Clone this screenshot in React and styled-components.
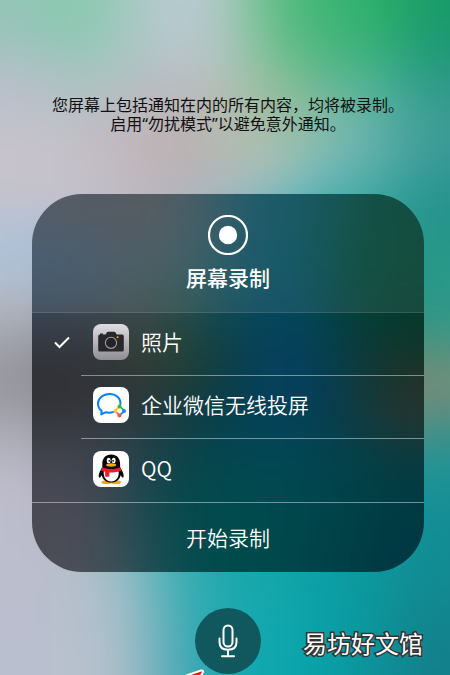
import React, { useId, useState } from 'react';
import styled, { createGlobalStyle } from 'styled-components';

const GlobalStyle = createGlobalStyle`
  * {
    box-sizing: border-box;
  }

  body {
    margin: 0;
    font-family: 'Noto Sans CJK SC', 'Noto Sans', sans-serif;
  }

  button {
    font-family: inherit;
    border: none;
    padding: 0;
    cursor: pointer;
  }
`;

const wallpaper = [
  '94c5b6 82caac a0c9bc bccad6 aec9c2 5cbe80 3cb476 2eb269 189a6a',
  'b2bfc8 a0c4bc aec4c4 bcc0ca b5c4c0 82bf94 55b588 44b288 249880',
  'c0c0cc bcc0c8 bcb8c0 bcb4b8 b4bcb0 a0bc9c 84b8a4 60b4a8 3a9c94',
  'c8c4ca c6c0c8 c2b8bc bcacac b8b8b4 b0c4b4 80bcb8 64b0ac 3c9a98',
  'c4c2cc c4c2cc c0bcc4 b8b8c0 a4bcc8 80b8c4 48b0b4 38a8a4 20918c',
  'aac2dc 9cb8dc a4b4c8 98b4b8 58a8b8 40a4b4 2c9c98 28987c 28988a',
  'b6bec8 acb8c4 98a8a4 60a098 30a0b0 20a0b0 189888 209474 28988c',
  'a4a5ae 888890 78806c 508468 2090b0 1888b0 188c80 389070 3c9684',
  '92929a 78787f 687468 407c70 1c88a8 147cac 288478 88806c 848c78',
  'aaaab4 94949e 607c84 389098 2098b0 1890b0 2c9090 70887c 409088',
  'bcbcca a8a8b8 6c98a4 2ca0a4 18a8ac 14a4ac 109ca0 1c9498 1c9498',
  'bebecd b4b4c4 78a8b0 28a8ac 14a8ac 10a4a8 0c9ca4 109498 148c94',
  'bcbecd b8bfcc 9cc0c6 3cb0b4 1ea8ac 14a6aa 0a9fa4 0c989c 128c94',
  'babecd b8bfcd a4bfc8 48acb4 1aa8ae 14a8ae 08a0a6 0c969c 12868e',
  'babfcf bac0ce acc0ca 50a8b4 16a8b0 10a8b0 06a0a8 0e929a 137f8a'
];

const glass = [
  '484f59 484e57 4a4e54 36525c 0a4e5f 074c59 02463e 003d32',
  '35536b 3b5364 3d5558 2c535c 074c60 004c5e 004632 003f2c',
  '3c4654 3e4852 3c4a48 144c4c 04465c 04465a 043f3a 033a2e',
  '303136 2f3236 34402f 1a3e34 063e56 064064 083c40 183328',
  '303136 323438 28383c 0c3c42 04405a 043f60 0e3a42 2e322a',
  '43454f 3c444e 1a424a 04454c 024852 024654 02424a 083c42',
  '4a4955 424852 10484e 014a4c 004a4e 00484e 004248 003a42',
  '4c4c56 48505a 184e54 004b4c 004a4c 00464a 003f46 003742'
];

const Backdrop = styled.svg`
  position: absolute;
  inset: 0;
  width: 100%;
  height: 100%;
`;

const Page = styled.main`
  position: relative;
  display: flex;
  flex-direction: column;
  align-items: center;
  min-height: 100vh;
  padding: 96px 26px 0 32px;
  overflow: hidden;
`;

const Notice = styled.p`
  position: relative;
  margin: 0;
  color: #111;
  font-family: 'Noto Sans', 'Noto Sans CJK SC', sans-serif;
  font-size: 16px;
  line-height: 19px;
  text-align: center;
  white-space: nowrap;
`;

const Card = styled.form`
  position: relative;
  display: flex;
  flex-direction: column;
  align-self: stretch;
  margin: 60px 0 0;
  border-radius: 50px;
  overflow: hidden;
  color: #fff;
`;

const Header = styled.header`
  position: relative;
  display: flex;
  flex-direction: column;
  align-items: center;
  gap: 6px;
  height: 119px;
  padding-top: 21px;
  border-bottom: 1px solid #ffffff1c;
  background: #ffffff14;
`;

const Title = styled.h1`
  margin: 0;
  font-size: 21px;
  font-weight: 500;
  line-height: 32px;
`;

const Options = styled.div`
  position: relative;
  display: flex;
  flex-direction: column;
  padding-left: 49px;
`;

const Option = styled.label`
  position: relative;
  display: flex;
  align-items: center;
  gap: 12px;
  height: 63px;
  padding: 0 0 4px 12px;
  border-bottom: ${({ $last }) => ($last ? 'none' : '1px solid #ffffff70')};
  cursor: pointer;
`;

const Name = styled.span`
  padding-bottom: 2px;
  font-size: 21px;
  font-weight: 350;
  line-height: 30px;
`;

const Radio = styled.input`
  appearance: none;
  position: absolute;
  left: -49px;
  width: 49px;
  height: 100%;
  margin: 0;
  cursor: pointer;
`;

const Tick = styled.svg`
  position: absolute;
  left: -28px;
  width: 18px;
  height: 14px;
  pointer-events: none;
`;

const AppIcon = styled.svg`
  flex: none;
  width: 36px;
  height: 36px;
  border-radius: 8px;
`;

const StartButton = styled.button`
  position: relative;
  height: 70px;
  padding-bottom: 2px;
  border-top: 1px solid #ffffff70;
  background: transparent;
  color: #fff;
  font-size: 21px;
  font-weight: 350;
  line-height: 32px;
`;

const MicButton = styled.button`
  position: relative;
  display: flex;
  align-items: center;
  justify-content: center;
  flex: none;
  width: 66px;
  height: 66px;
  margin-top: 36px;
  border-radius: 50%;
  background: #10575e;
`;

const Watermark = styled.span`
  position: absolute;
  right: 27px;
  bottom: 14px;
  color: #fff;
  font-size: 24px;
  line-height: 36px;
  paint-order: stroke fill;
  -webkit-text-stroke: 3px #333;
`;

const Arrow = styled.svg`
  position: absolute;
  left: 180px;
  bottom: 0;
  width: 26px;
  height: 6px;
`;

// Grid of colours melted together into a soft backdrop
const ColorMesh = ({ rows }) => {
  const id = useId();
  const cells = rows.map(row => row.split(' '));
  const w = cells[0].length;
  const h = cells.length;
  const clamp = (n, max) => Math.min(Math.max(n, 0), max - 1);
  const rects = [];

  // two extra cells on every side keep the edges from fading out
  for (let y = -2; y < h + 2; y++) {
    for (let x = -2; x < w + 2; x++) {
      rects.push(
        <rect
          key={`${x}:${y}`}
          x={x * 10}
          y={y * 10}
          width="10"
          height="10"
          fill={`#${cells[clamp(y, h)][clamp(x, w)]}`}
        />
      );
    }
  }

  return (
    <Backdrop
      viewBox={`0 0 ${w * 10} ${h * 10}`}
      preserveAspectRatio="none"
      aria-hidden="true"
    >
      <filter
        id={id}
        filterUnits="userSpaceOnUse"
        x="-20"
        y="-20"
        width={w * 10 + 40}
        height={h * 10 + 40}
        colorInterpolationFilters="sRGB"
      >
        <feGaussianBlur stdDeviation="6" />
      </filter>
      <g filter={`url(#${id})`} shapeRendering="crispEdges">
        {rects}
      </g>
    </Backdrop>
  );
};

const CameraIcon = () => (
  <AppIcon viewBox="0 0 36 36" aria-hidden="true">
    <defs>
      <linearGradient id="silver" x1="0" y1="0" x2="0" y2="1">
        <stop offset="0" stopColor="#dedee2" />
        <stop offset="1" stopColor="#8f8e96" />
      </linearGradient>
    </defs>
    <rect width="36" height="36" fill="url(#silver)" />
    <path
      d="M7 10.5V9.6h3v.9h2.6l1.2-2.1q.4-.7 1.2-.7h6.3q.8 0 1.2.7l1.2 2.1h5.6q1.5 0 1.5 1.5v14q0 1.5-1.5 1.5H6.7q-1.5 0-1.5-1.5V12q0-1.5 1.8-1.5z"
      fill="#29292b"
    />
    <circle cx="18" cy="18.8" r="5.6" fill="#242426" stroke="#9b9ba1" strokeWidth="1.1" />
    <circle cx="24.6" cy="13.2" r="1" fill="#f0b428" />
  </AppIcon>
);

const WeComIcon = () => (
  <AppIcon viewBox="0 0 36 36" aria-hidden="true">
    <rect width="36" height="36" fill="#fff" />
    <path
      d="M27.4 17.5C28 10.8 22.6 7 16.6 7 10 7 5 11.2 5 16.8c0 3.2 1.4 5.4 3.7 7.1L8.2 27.4l4.2-2.1c2.5.6 5.4.6 7.8-.3"
      fill="none"
      stroke="#0b82f3"
      strokeWidth="2"
      strokeLinecap="round"
      strokeLinejoin="round"
    />
    <g fill="none" strokeWidth="1.8" strokeLinecap="round">
      <path d="M22.6 23.2l3-2.8" stroke="#ffc52b" />
      <path d="M27.6 20.2l2.9 2.8" stroke="#2cbc3c" />
      <path d="M30.4 25l-3 2.6" stroke="#1684f5" />
      <path d="M25.4 27.2l-2.5-2.3" stroke="#ff6535" />
    </g>
    <circle cx="26.5" cy="19.5" r="2" fill="#2cbc3c" />
    <circle cx="31" cy="24" r="2" fill="#1684f5" />
    <circle cx="26.4" cy="28.4" r="2" fill="#ff5928" />
    <circle cx="22.3" cy="24" r="2" fill="#ffc52b" />
  </AppIcon>
);

const QQIcon = () => (
  <AppIcon viewBox="0 0 36 36" aria-hidden="true">
    <rect width="36" height="36" fill="#fff" />
    <ellipse cx="13.6" cy="31.2" rx="5" ry="1.9" fill="#f5a418" />
    <ellipse cx="23" cy="31.2" rx="5" ry="1.9" fill="#f5a418" />
    <path
      d="M18.2 3.4c-5.6 0-8.9 3.9-8.9 9.1v3.7c-1.6 2.6-3.6 6-3.6 8.6 0 1.8.7 2.1 1.3 1.6.7-.5 1.2-1.2 1.8-2.2.8 4.4 4.4 7.3 9.4 7.3s8.6-2.9 9.4-7.3c.6 1 1.1 1.7 1.8 2.2.6.5 1.3.2 1.3-1.6 0-2.6-2-6-3.6-8.6v-3.7c0-5.2-3.3-9.1-8.9-9.1z"
      fill="#080808"
    />
    <path d="M11 19h14.4c1.3 6-1.4 11.4-7.2 11.4S9.7 25 11 19z" fill="#fff" />
    <ellipse cx="15.7" cy="9.5" rx="2" ry="2.7" fill="#fff" />
    <ellipse cx="20.7" cy="9.5" rx="2" ry="2.7" fill="#fff" />
    <circle cx="16.3" cy="9.8" r="0.9" fill="#080808" />
    <circle cx="20.1" cy="9.8" r="0.9" fill="#080808" />
    <ellipse cx="18.2" cy="14" rx="5" ry="1.7" fill="#f5a418" />
    <path
      d="M9 16.2c5.6 2.4 12.8 2.4 18.4 0l1 3.2c-3.4 1.5-8 2.2-12 2v4q-2.2.8-4.3 0v-4.6c-1.7-.3-3.2-.8-4.2-1.4z"
      fill="#e61f2d"
    />
  </AppIcon>
);

const RecordIcon = () => (
  <svg width="40" height="40" viewBox="0 0 40 40" aria-hidden="true">
    <circle cx="20" cy="20" r="19" fill="none" stroke="#fff" strokeWidth="2.2" />
    <circle cx="20" cy="20" r="9.2" fill="#fff" />
  </svg>
);

const MicIcon = () => (
  <svg width="20" height="34" viewBox="0 0 20 34" aria-hidden="true">
    <g fill="none" stroke="#fff" strokeWidth="2" strokeLinecap="round">
      <rect x="5.5" y="1.5" width="9" height="21" rx="4.5" />
      <path d="M1.5 14.5v3.5c0 5 3.2 7.8 8.5 7.8s8.5-2.8 8.5-7.8v-3.5M10 26v6M4 32.2h12" />
    </g>
  </svg>
);

const targets = [
  { id: 'photos', label: '照片', Icon: CameraIcon },
  { id: 'wecom', label: '企业微信无线投屏', Icon: WeComIcon },
  { id: 'qq', label: 'QQ', Icon: QQIcon }
];

export default function App() {
  const [target, setTarget] = useState('photos');

  return (
    <>
      <GlobalStyle />
      <Page>
        <ColorMesh rows={wallpaper} />
        <Notice>
          您屏幕上包括通知在内的所有内容，均将被录制。
          <br />
          启用“勿扰模式”以避免意外通知。
        </Notice>
        <Card onSubmit={e => e.preventDefault()}>
          <ColorMesh rows={glass} />
          <Header>
            <RecordIcon />
            <Title>屏幕录制</Title>
          </Header>
          <Options role="radiogroup" aria-label="屏幕录制">
            {targets.map(({ id, label, Icon }, i) => (
              <Option key={id} $last={i === targets.length - 1}>
                <Radio
                  type="radio"
                  name="target"
                  value={id}
                  checked={target === id}
                  onChange={() => setTarget(id)}
                />
                {target === id && (
                  <Tick viewBox="0 0 18 14" aria-hidden="true">
                    <path
                      d="M2 7.5l4.5 4.5L16 2.5"
                      fill="none"
                      stroke="#fff"
                      strokeWidth="2"
                    />
                  </Tick>
                )}
                <Icon />
                <Name>{label}</Name>
              </Option>
            ))}
          </Options>
          <StartButton type="submit">开始录制</StartButton>
        </Card>
        <MicButton type="button" aria-label="麦克风">
          <MicIcon />
        </MicButton>
        <Watermark>易坊好文馆</Watermark>
        <Arrow viewBox="0 0 26 6" aria-hidden="true">
          <path
            d="M2 8L21 1.5Q24 1 22.5 4L20 8z"
            fill="#e8141c"
            stroke="#fff"
            strokeWidth="2"
          />
        </Arrow>
      </Page>
    </>
  );
}
